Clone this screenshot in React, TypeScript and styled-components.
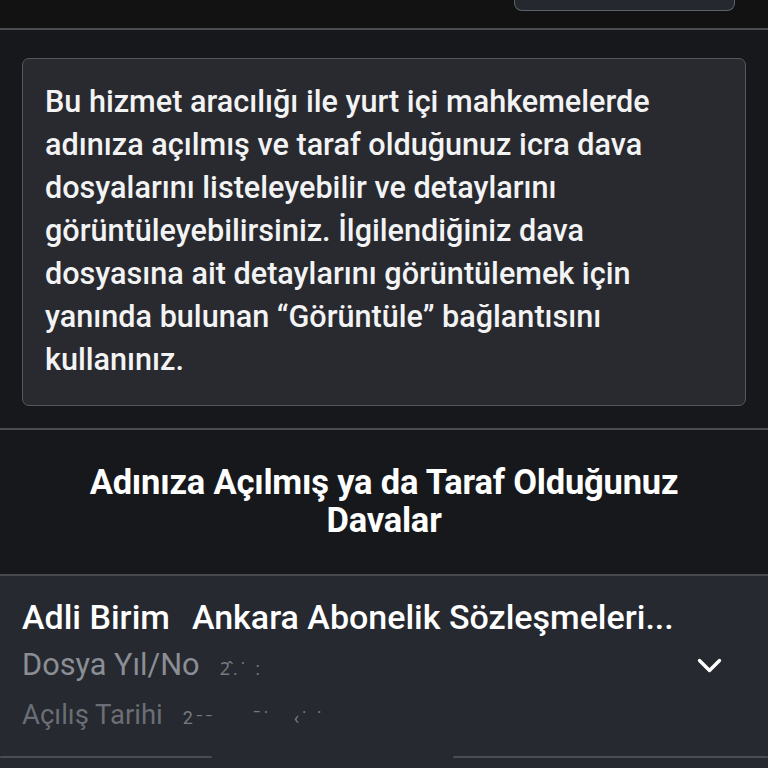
import React from "react";
import styled, { createGlobalStyle } from "styled-components";

const Global = createGlobalStyle`
  html, body { margin: 0; padding: 0; background: #17181c; }
  body { font-family: Roboto, "Noto Sans", "Liberation Sans", sans-serif; -webkit-font-smoothing: antialiased; }
  * { box-sizing: border-box; }
`;

const Page = styled.div`
  width: 768px;
  height: 768px;
  overflow: hidden;
  display: flex;
  flex-direction: column;
  background: #17181c;
`;

const Header = styled.header`
  height: 30px;
  flex: none;
  background: #121213;
  border-bottom: 2px solid #4b4c4f;
  display: flex;
  justify-content: flex-end;
  align-items: flex-start;
  padding-right: 33px;
`;

const HeaderButton = styled.button`
  width: 221px;
  height: 11px;
  border: 1.5px solid #5d6067;
  border-top: none;
  border-radius: 0 0 8px 8px;
  background: #25282e;
  padding: 0;
`;

const Intro = styled.section`
  padding: 28px 22px 22px;
  border-bottom: 2px solid #4b4c50;
  flex: none;
`;

const InfoBox = styled.div`
  background: #282a30;
  border: 1.5px solid #55585e;
  border-radius: 7px;
  padding: 21px 20px 24px 22px;
  color: #f3f3f4;
  font-size: 30.6px;
  font-weight: 500;
  line-height: 43px;
  white-space: nowrap;
`;

const TitleSection = styled.section`
  padding: 33px 20px 35px;
  border-bottom: 2px solid #46484d;
  flex: none;
`;

const Title = styled.h2`
  margin: 0;
  text-align: center;
  color: #ffffff;
  font-size: 34.5px;
  font-weight: 700;
  line-height: 38px;
  letter-spacing: -0.2px;
  white-space: nowrap;
`;

const Card = styled.section`
  flex: 1;
  background: #262930;
  display: flex;
  flex-direction: column;
`;

const CardBody = styled.div`
  display: flex;
  align-items: center;
  padding: 18px 46px 18px 22px;
`;

const Rows = styled.div`
  flex: 1;
  display: flex;
  flex-direction: column;
`;

const Row = styled.div<{ $tone: "main" | "sub" | "dim" }>`
  display: flex;
  align-items: baseline;
  gap: ${(p) => (p.$tone === "main" ? 22 : 20)}px;
  height: 47px;
  line-height: 47px;
  margin-top: ${(p) => (p.$tone === "dim" ? 3 : 0)}px;
  font-size: ${(p) => (p.$tone === "main" ? 34 : p.$tone === "sub" ? 30.7 : 27.5)}px;
  font-weight: ${(p) => (p.$tone === "main" ? 500 : 400)};
  color: ${(p) => (p.$tone === "main" ? "#ffffff" : p.$tone === "sub" ? "#8b8e94" : "#6b6e74")};
  white-space: nowrap;
`;

const Redacted = styled.span`
  font-size: 18px;
  color: #9a9ca0;
  opacity: 0.7;
  letter-spacing: 3px;
`;

const Chevron = styled.svg`
  width: 25px;
  height: 16px;
  flex: none;
`;

const Footer = styled.div`
  display: flex;
  justify-content: space-between;
`;

const FooterLine = styled.div<{ $w: number }>`
  width: ${(p) => p.$w}px;
  height: 2px;
  background: #4a4d55;
  border-radius: 1px;
`;

export default function App() {
  return (
    <Page>
      <Global />
      <Header>
        <HeaderButton aria-label="menu" />
      </Header>
      <Intro>
        <InfoBox>
          Bu hizmet aracılığı ile yurt içi mahkemelerde
          <br />
          adınıza açılmış ve taraf olduğunuz icra dava
          <br />
          dosyalarını listeleyebilir ve detaylarını
          <br />
          görüntüleyebilirsiniz. İlgilendiğiniz dava
          <br />
          dosyasına ait detaylarını görüntülemek için
          <br />
          yanında bulunan “Görüntüle” bağlantısını
          <br />
          kullanınız.
        </InfoBox>
      </Intro>
      <TitleSection>
        <Title>
          Adınıza Açılmış ya da Taraf Olduğunuz
          <br />
          Davalar
        </Title>
      </TitleSection>
      <Card>
        <CardBody>
          <Rows>
            <Row $tone="main">
              <span>Adli Birim</span>
              <span>Ankara Abonelik Sözleşmeleri...</span>
            </Row>
            <Row $tone="sub">
              <span>Dosya Yıl/No</span>
              <Redacted>2̂.˙ :</Redacted>
            </Row>
            <Row $tone="dim">
              <span>Açılış Tarihi</span>
              <Redacted>2⁻⁻ &nbsp; &nbsp; ˉ˙ &nbsp; ‹˙ ˙</Redacted>
            </Row>
          </Rows>
          <Chevron viewBox="0 0 25 16">
            <path d="M2.5 2.5 L12.5 12.5 L22.5 2.5" fill="none" stroke="#ffffff" strokeWidth="3.4" strokeLinecap="round" strokeLinejoin="round" />
          </Chevron>
        </CardBody>
        <Footer>
          <FooterLine $w={212} />
          <FooterLine $w={315} />
        </Footer>
      </Card>
    </Page>
  );
}
